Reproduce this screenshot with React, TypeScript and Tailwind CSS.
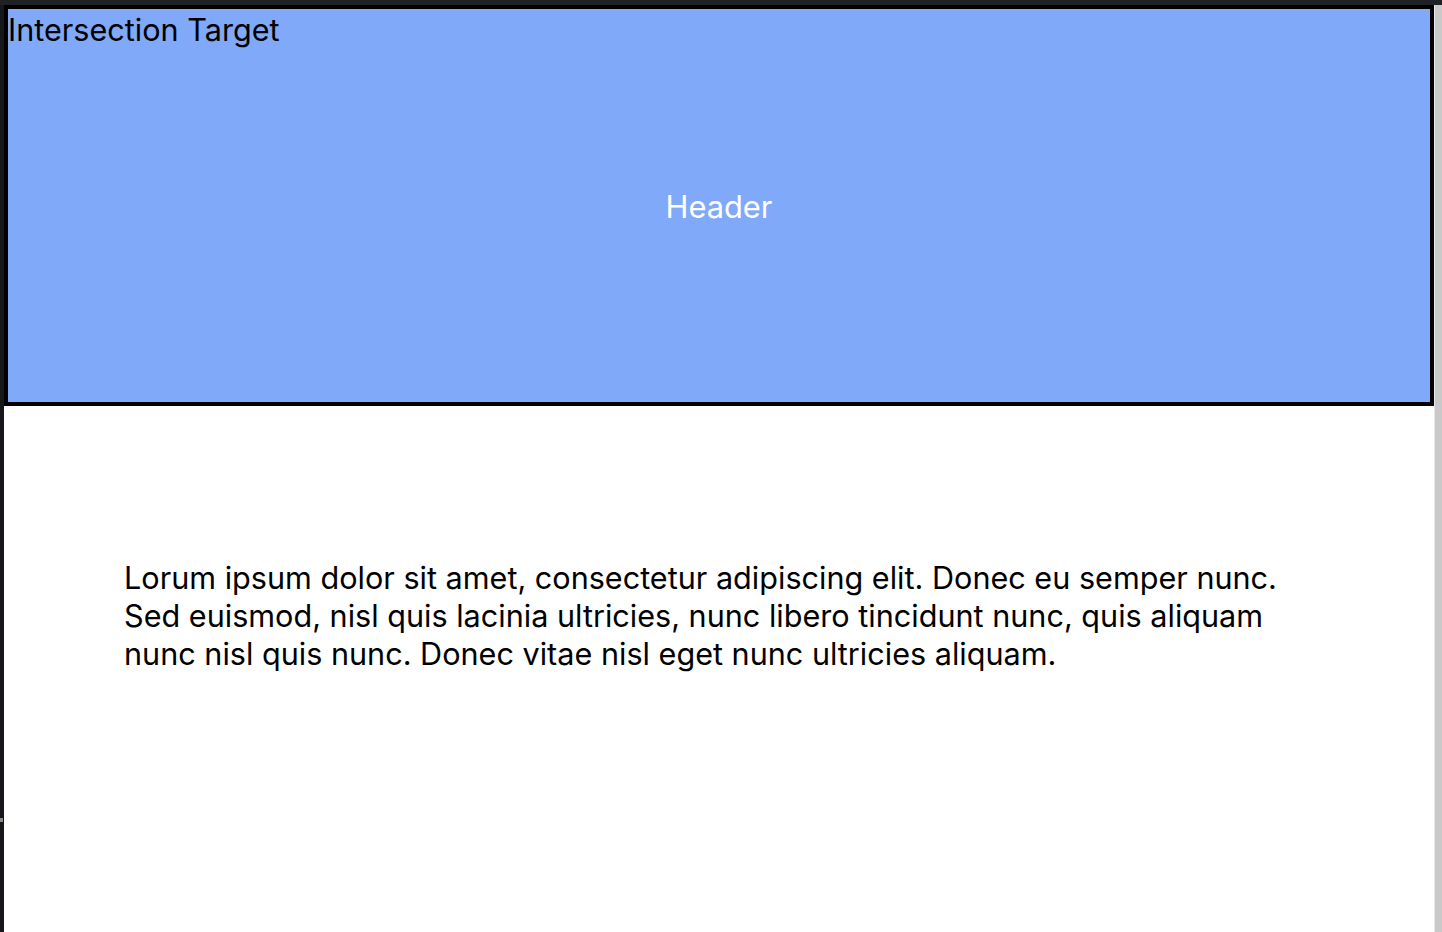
export default function App() {
  return (
    <div className="flex h-[932px] w-[1442px] flex-col overflow-hidden bg-white font-['Inter',sans-serif]">
      <div className="h-[5px] w-full shrink-0 bg-[#1f2125]" />
      <div className="flex min-h-0 flex-1">
        <div className="flex w-[4px] shrink-0 flex-col bg-[#15171b]">
          <div className="mt-[813px] h-[4px] w-[3px] bg-[#8a8a8a]" />
        </div>
        <main className="flex min-w-0 flex-1 flex-col">
          <header className="relative flex h-[401px] shrink-0 items-center justify-center border-4 border-black bg-[#81a9f9]">
            <span className="absolute left-[0px] top-[2px] text-[30.6px] leading-[38px] text-black">
              Intersection Target
            </span>
            <h1 className="mt-[4px] text-[30.8px] text-white">Header</h1>
          </header>
          <p className="mt-[153px] px-[120px] text-[30.6px] leading-[38px] text-black">
            Lorum ipsum dolor sit amet, consectetur adipiscing elit. Donec eu
            semper nunc. Sed euismod, nisl quis lacinia ultricies, nunc libero
            tincidunt nunc, quis aliquam nunc nisl quis nunc. Donec vitae nisl
            eget nunc ultricies aliquam.
          </p>
        </main>
        <div className="w-[8px] shrink-0 border-l border-[#e6e6e6] bg-[#c9c9c9]" />
      </div>
    </div>
  );
}
